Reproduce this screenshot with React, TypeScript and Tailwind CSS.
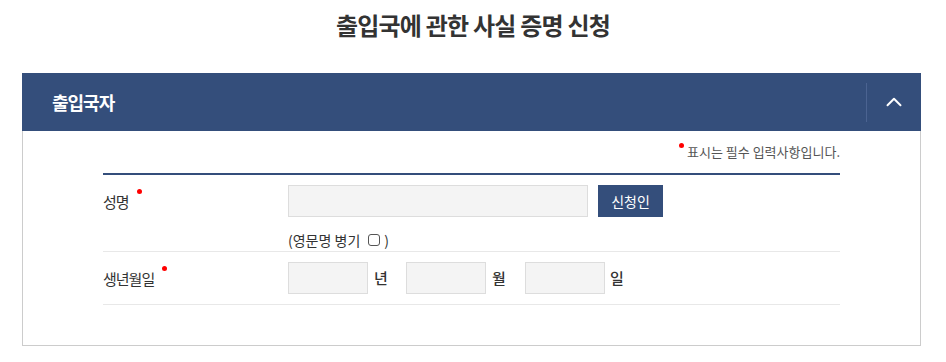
import { ChevronUp } from 'lucide-react'

function Req({ className = '' }: { className?: string }) {
    return <span className={`absolute w-[5px] h-[5px] rounded-full bg-[#ff0000] ${className}`} />
}

export default function App() {
    return (
    <main className="w-[946px] h-[362px] bg-white text-[#333] font-['Noto_Sans_CJK_KR','Noto_Sans',sans-serif] overflow-hidden">
        <h2 className="h-[50px] flex items-center justify-center text-[24px] font-bold tracking-[-0.8px]">
            출입국에 관한 사실 증명 신청
        </h2>

        <section className="mt-[23px] ml-[22px] w-[899px]">
            <div className="h-[58px] bg-[#344e7b] flex items-center">
                <h3 className="flex-1 pl-[30px] text-white text-[18px] font-bold tracking-[-1px]">출입국자</h3>
                <span className="w-px h-[39px] bg-[#4b6391]" />
                <button className="w-[54px] h-full flex items-center justify-center text-white">
                    <ChevronUp size={26} strokeWidth={1.8} />
                </button>
            </div>

            <div className="border border-t-0 border-[#cccccc] px-[80px] pb-[40px]">
                <p className="pt-[12px] pb-[12px] text-right text-[13px] leading-[18px] text-[#555]">
                    <span className="relative pl-[8px]">
                        <Req className="left-0 top-[1px]" />
                        표시는 필수 입력사항입니다.
                    </span>
                </p>

                <div className="border-t-2 border-[#344e7b]">
                    <div className="flex border-b border-[#e8e8e8]">
                        <div className="w-[185px] pt-[11px]">
                            <span className="relative text-[15px] leading-[32px] tracking-[-1px]">
                                성명
                                <Req className="-right-[13px] top-[-2px]" />
                            </span>
                        </div>
                        <div className="pt-[10px] pb-[1px]">
                            <div className="flex">
                                <input className="w-[300px] h-[32px] bg-[#f4f4f4] border border-[#dddddd] outline-none" />
                                <button className="ml-[10px] w-[65px] h-[32px] bg-[#344e7b] text-white text-[14px]">신청인</button>
                            </div>
                            <div className="mt-[13px] h-[20px] flex items-center text-[14px]">
                                (영문명 병기
                                <span className="ml-[8px] w-[12px] h-[12px] border border-[#555] rounded-[3px]" />
                                <span className="ml-[4px]">)</span>
                            </div>
                        </div>
                    </div>

                    <div className="flex border-b border-[#e8e8e8]">
                        <div className="w-[185px] pt-[11px]">
                            <span className="relative text-[15px] leading-[32px] tracking-[-1px]">
                                생년월일
                                <Req className="-right-[13px] top-[-2px]" />
                            </span>
                        </div>
                        <div className="py-[10px] flex items-center text-[15px] font-medium">
                            <input className="w-[80px] h-[32px] bg-[#f4f4f4] border border-[#dddddd] outline-none" />
                            <span className="ml-[6px] w-[32px]">년</span>
                            <input className="w-[80px] h-[32px] bg-[#f4f4f4] border border-[#dddddd] outline-none" />
                            <span className="ml-[6px] w-[33px]">월</span>
                            <input className="w-[80px] h-[32px] bg-[#f4f4f4] border border-[#dddddd] outline-none" />
                            <span className="ml-[5px]">일</span>
                        </div>
                    </div>
                </div>
            </div>
        </section>
    </main>
    )
}
